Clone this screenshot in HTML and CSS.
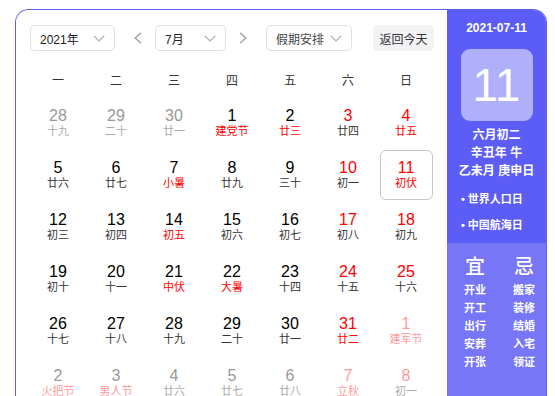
FILE: index.html
```html
<!DOCTYPE html>
<html lang="zh-CN">
<head>
<meta charset="utf-8">
<title>万年历</title>
<link rel="stylesheet" href="styles.css">
</head>
<body>
<div class="cal">
  <div class="main">
    <div class="toolbar">
      <div class="select sel-year"><span>2021年</span><svg class="chev" width="12" height="7" viewBox="0 0 12 7"><path d="M0.8 0.8 L6 6 L11.2 0.8" fill="none" stroke="#a8abb2" stroke-width="1.2"/></svg></div>
      <svg class="arrow arrow-prev" width="8" height="12" viewBox="0 0 8 12"><path d="M7 0.8 L1.2 6 L7 11.2" fill="none" stroke="#a0a0a0" stroke-width="1.4"/></svg>
      <div class="select sel-month"><span>7月</span><svg class="chev" width="12" height="7" viewBox="0 0 12 7"><path d="M0.8 0.8 L6 6 L11.2 0.8" fill="none" stroke="#a8abb2" stroke-width="1.2"/></svg></div>
      <svg class="arrow arrow-next" width="8" height="12" viewBox="0 0 8 12"><path d="M1 0.8 L6.8 6 L1 11.2" fill="none" stroke="#a0a0a0" stroke-width="1.4"/></svg>
      <div class="select sel-holiday"><span>假期安排</span><svg class="chev" width="12" height="7" viewBox="0 0 12 7"><path d="M0.8 0.8 L6 6 L11.2 0.8" fill="none" stroke="#a8abb2" stroke-width="1.2"/></svg></div>
      <div class="btn-today">返回今天</div>
    </div>
    <div class="weekdays">
      <div>一</div><div>二</div><div>三</div><div>四</div><div>五</div><div>六</div><div>日</div>
    </div>
    <div class="days">
      <div class="cell"><div class="box"><span class="n g">28</span><span class="l g">十九</span></div></div>
      <div class="cell"><div class="box"><span class="n g">29</span><span class="l g">二十</span></div></div>
      <div class="cell"><div class="box"><span class="n g">30</span><span class="l g">廿一</span></div></div>
      <div class="cell"><div class="box"><span class="n">1</span><span class="l r">建党节</span></div></div>
      <div class="cell"><div class="box"><span class="n">2</span><span class="l r">廿三</span></div></div>
      <div class="cell"><div class="box"><span class="n r">3</span><span class="l">廿四</span></div></div>
      <div class="cell"><div class="box"><span class="n r">4</span><span class="l r">廿五</span></div></div>

      <div class="cell"><div class="box"><span class="n">5</span><span class="l">廿六</span></div></div>
      <div class="cell"><div class="box"><span class="n">6</span><span class="l">廿七</span></div></div>
      <div class="cell"><div class="box"><span class="n">7</span><span class="l r">小暑</span></div></div>
      <div class="cell"><div class="box"><span class="n">8</span><span class="l">廿九</span></div></div>
      <div class="cell"><div class="box"><span class="n">9</span><span class="l">三十</span></div></div>
      <div class="cell"><div class="box"><span class="n r">10</span><span class="l">初一</span></div></div>
      <div class="cell"><div class="box selected"><span class="n r">11</span><span class="l r">初伏</span></div></div>

      <div class="cell"><div class="box"><span class="n">12</span><span class="l">初三</span></div></div>
      <div class="cell"><div class="box"><span class="n">13</span><span class="l">初四</span></div></div>
      <div class="cell"><div class="box"><span class="n">14</span><span class="l r">初五</span></div></div>
      <div class="cell"><div class="box"><span class="n">15</span><span class="l">初六</span></div></div>
      <div class="cell"><div class="box"><span class="n">16</span><span class="l">初七</span></div></div>
      <div class="cell"><div class="box"><span class="n r">17</span><span class="l">初八</span></div></div>
      <div class="cell"><div class="box"><span class="n r">18</span><span class="l">初九</span></div></div>

      <div class="cell"><div class="box"><span class="n">19</span><span class="l">初十</span></div></div>
      <div class="cell"><div class="box"><span class="n">20</span><span class="l">十一</span></div></div>
      <div class="cell"><div class="box"><span class="n">21</span><span class="l r">中伏</span></div></div>
      <div class="cell"><div class="box"><span class="n">22</span><span class="l r">大暑</span></div></div>
      <div class="cell"><div class="box"><span class="n">23</span><span class="l">十四</span></div></div>
      <div class="cell"><div class="box"><span class="n r">24</span><span class="l">十五</span></div></div>
      <div class="cell"><div class="box"><span class="n r">25</span><span class="l">十六</span></div></div>

      <div class="cell"><div class="box"><span class="n">26</span><span class="l">十七</span></div></div>
      <div class="cell"><div class="box"><span class="n">27</span><span class="l">十八</span></div></div>
      <div class="cell"><div class="box"><span class="n">28</span><span class="l">十九</span></div></div>
      <div class="cell"><div class="box"><span class="n">29</span><span class="l">二十</span></div></div>
      <div class="cell"><div class="box"><span class="n">30</span><span class="l">廿一</span></div></div>
      <div class="cell"><div class="box"><span class="n r">31</span><span class="l r">廿二</span></div></div>
      <div class="cell"><div class="box"><span class="n p">1</span><span class="l p">建军节</span></div></div>

      <div class="cell"><div class="box"><span class="n g">2</span><span class="l p">火把节</span></div></div>
      <div class="cell"><div class="box"><span class="n g">3</span><span class="l p">男人节</span></div></div>
      <div class="cell"><div class="box"><span class="n g">4</span><span class="l g">廿六</span></div></div>
      <div class="cell"><div class="box"><span class="n g">5</span><span class="l g">廿七</span></div></div>
      <div class="cell"><div class="box"><span class="n g">6</span><span class="l g">廿八</span></div></div>
      <div class="cell"><div class="box"><span class="n p">7</span><span class="l p">立秋</span></div></div>
      <div class="cell"><div class="box"><span class="n p">8</span><span class="l g">初一</span></div></div>
    </div>
  </div>
  <div class="side">
    <div class="side-top">
      <div class="today-date">2021-07-11</div>
      <div class="big-day">11</div>
      <div class="lunar-info">
        <div>六月初二</div>
        <div>辛丑年 牛</div>
        <div>乙未月 庚申日</div>
      </div>
      <ul class="festivals">
        <li>世界人口日</li>
        <li>中国航海日</li>
      </ul>
    </div>
    <div class="side-bottom">
      <div class="yiji">
        <div class="col">
          <div class="head">宜</div>
          <div>开业</div><div>开工</div><div>出行</div><div>安葬</div><div>开张</div>
        </div>
        <div class="col">
          <div class="head">忌</div>
          <div>搬家</div><div>装修</div><div>结婚</div><div>入宅</div><div>领证</div>
        </div>
      </div>
    </div>
  </div>
</div>
</body>
</html>
```
FILE: styles.css
```css
* { box-sizing: border-box; }
html, body { margin: 0; padding: 0; background: #fff; }
body {
  font-family: "Liberation Sans", "Noto Sans CJK SC", Arial, sans-serif;
  color: #222;
  height: 396px;
  overflow: hidden;
}
.cal {
  margin: 9px 0 0 15px;
  width: 532px;
  height: 387px;
  border: 1px solid #5f5ff2;
  border-bottom: none;
  border-radius: 14px 14px 0 0;
  overflow: hidden;
  display: flex;
}
.main {
  width: 431px;
  padding: 15px 0 0 13px;
  background: #fff;
  overflow: hidden;
}
.toolbar {
  display: flex;
  align-items: center;
  height: 26px;
  margin-left: 1px;
}
.select {
  height: 26px;
  border: 1px solid #dcdfe6;
  border-radius: 5px;
  display: flex;
  align-items: center;
  justify-content: space-between;
  padding: 0 9px 0 9px;
  font-size: 12px;
  color: #222;
}
.select .chev { display: block; }
.sel-year { width: 85px; }
.sel-month { width: 71px; }
.sel-holiday { width: 86px; color: #444; }
.arrow { display: block; }
.arrow-prev { margin: 0 13px 0 19px; }
.arrow-next { margin: 0 19px 0 13px; }
.btn-today {
  margin-left: 21px;
  width: 61px;
  height: 26px;
  border-radius: 5px;
  background: #f3f3f5;
  font-size: 12px;
  color: #333;
  display: flex;
  align-items: center;
  justify-content: center;
}
.weekdays {
  margin-top: 10px;
  display: grid;
  grid-template-columns: repeat(7, 58px);
  height: 36px;
  align-items: center;
  text-align: center;
  font-size: 12px;
  color: #333;
}
.days {
  display: grid;
  grid-template-columns: repeat(7, 58px);
  grid-auto-rows: 52px;
}
.cell {
  display: flex;
  align-items: center;
  justify-content: center;
}
.box {
  width: 53px;
  height: 50px;
  border: 1px solid transparent;
  border-radius: 6px;
  display: flex;
  flex-direction: column;
  align-items: center;
  justify-content: center;
}
.box.selected { border-color: #c6c6ce; }
.n {
  font-size: 16px;
  line-height: 17px;
  color: #000;
}
.l {
  font-size: 11px;
  line-height: 15px;
  color: #333;
}
.n.r, .l.r { color: #ff0000; }
.n.g { color: #999; }
.l.g { color: #aaa; }
.n.p, .l.p { color: #ff9b9b; }

.side {
  width: 99px;
  display: flex;
  flex-direction: column;
  color: #fff;
}
.side-top {
  background: #5c5cf6;
  padding-top: 11px;
  padding-bottom: 5px;
  display: flex;
  flex-direction: column;
  align-items: center;
}
.today-date {
  font-size: 12px;
  line-height: 14px;
  font-weight: bold;
}
.big-day {
  margin-top: 14px;
  width: 72px;
  height: 72px;
  border-radius: 9px;
  background: #b0b0fa;
  display: flex;
  align-items: center;
  justify-content: center;
  font-size: 46px;
  color: #fff;
}
.lunar-info {
  margin-top: 5px;
  text-align: center;
  font-size: 12px;
  line-height: 18px;
  font-weight: 600;
}
.festivals {
  list-style: none;
  margin: 6px 0 0 0;
  padding: 0 0 0 14px;
  align-self: stretch;
  font-size: 11px;
  line-height: 26px;
  font-weight: 600;
}
.festivals li::before {
  content: "•";
  margin-right: 3px;
}
.side-bottom {
  flex: 1;
  background: #7676f6;
  padding: 12px 0 0 17px;
}
.yiji {
  display: flex;
  gap: 27px;
}
.yiji .col {
  width: 22px;
  display: flex;
  flex-direction: column;
  align-items: center;
  font-size: 11px;
  line-height: 18px;
  font-weight: 600;
}
.yiji .head {
  font-size: 20px;
  line-height: 24px;
  font-weight: 500;
  margin-bottom: 2px;
}
```
